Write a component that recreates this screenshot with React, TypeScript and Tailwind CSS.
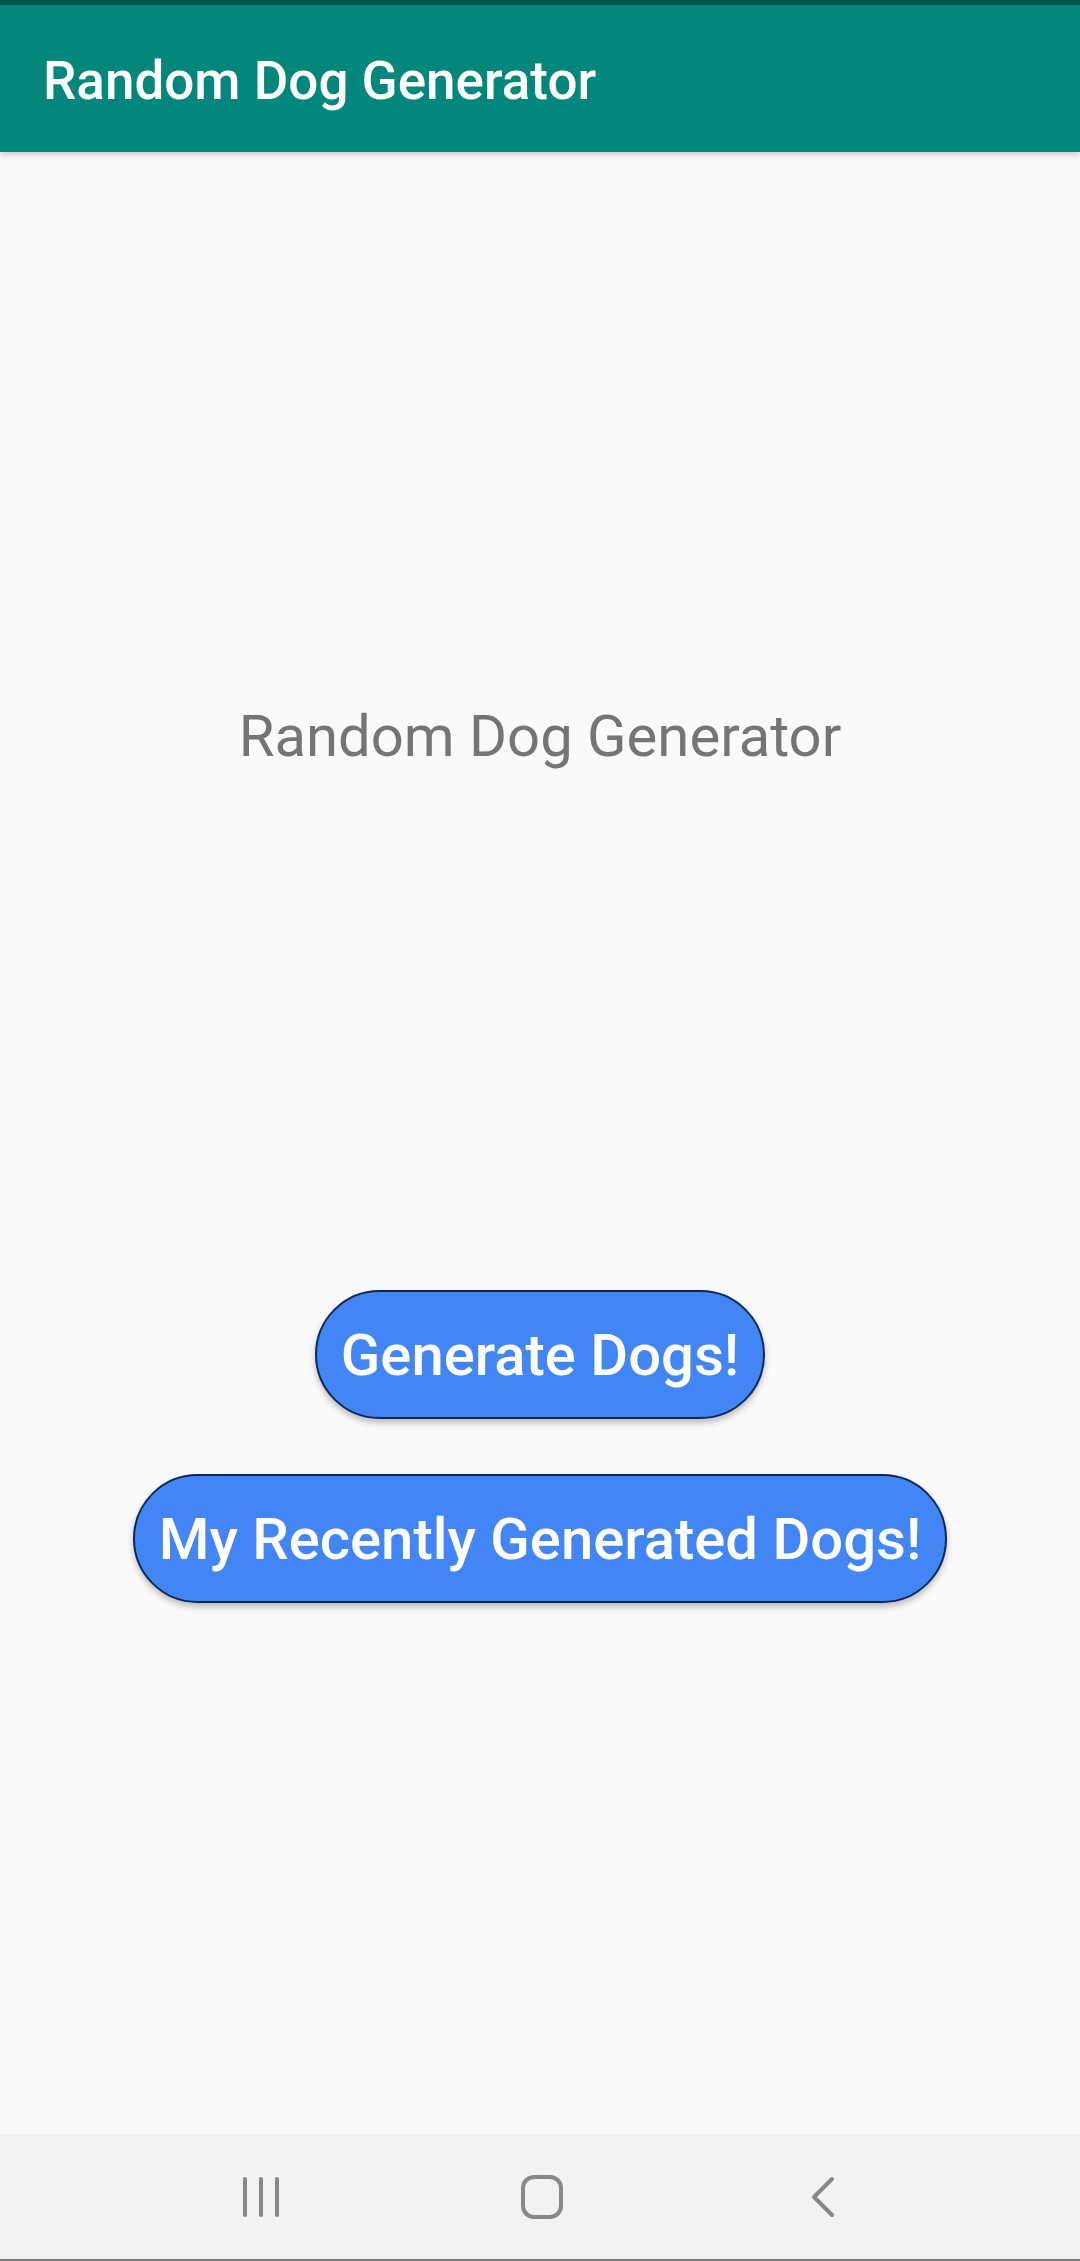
import React from 'react';

const font = { fontFamily: 'Roboto, "Noto Sans", sans-serif' };

function PillButton({ label }: { label: string }) {
    return (
        <button className="h-[129px] rounded-full border-2 border-[#0b2a5b] bg-[#4285f4] px-[24px] text-[58px] font-medium leading-none text-white shadow-[0_4px_6px_rgba(0,0,0,0.25)]">
            {label}
        </button>
    );
}

export default function App() {
    return (
        <div className="flex h-[2261px] w-[1080px] flex-col bg-[#fafafa]" style={font}>
            <div className="h-[5px] bg-[#00574b]" />
            <header className="relative z-10 flex h-[147px] items-center bg-[#02877a] pl-[43px] pt-[6px] shadow-[0_3px_6px_rgba(0,0,0,0.18)]">
                <h1 className="text-[53px] font-medium text-white">Random Dog Generator</h1>
            </header>

            <main className="flex flex-1 flex-col items-center">
                <p className="mt-[550px] text-[58px] leading-[68px] text-[#757575]">Random Dog Generator</p>
                <div className="mt-[520px] flex flex-col items-center gap-[55px]">
                    <PillButton label="Generate Dogs!" />
                    <PillButton label="My Recently Generated Dogs!" />
                </div>
            </main>

            <nav className="flex h-[127px] flex-col bg-[#f2f2f2]">
                <div className="flex flex-1 items-center justify-center pl-[4px]">
                    <div className="flex w-[281px] justify-center">
                        <svg width="40" height="42" viewBox="0 0 40 42" fill="none" stroke="#888" strokeWidth="4" strokeLinecap="round">
                            <line x1="4" y1="3" x2="4" y2="39" />
                            <line x1="20" y1="3" x2="20" y2="39" />
                            <line x1="36" y1="3" x2="36" y2="39" />
                        </svg>
                    </div>
                    <div className="flex w-[281px] justify-center">
                        <svg width="42" height="44" viewBox="0 0 42 44" fill="none" stroke="#888" strokeWidth="4">
                            <rect x="2" y="2" width="38" height="40" rx="11" />
                        </svg>
                    </div>
                    <div className="flex w-[281px] justify-center">
                        <svg width="26" height="42" viewBox="0 0 26 42" fill="none" stroke="#888" strokeWidth="4" strokeLinecap="round" strokeLinejoin="round">
                            <polyline points="22,3 4,21 22,39" />
                        </svg>
                    </div>
                </div>
                <div className="h-[2px] bg-[#808080]" />
            </nav>
        </div>
    );
}
